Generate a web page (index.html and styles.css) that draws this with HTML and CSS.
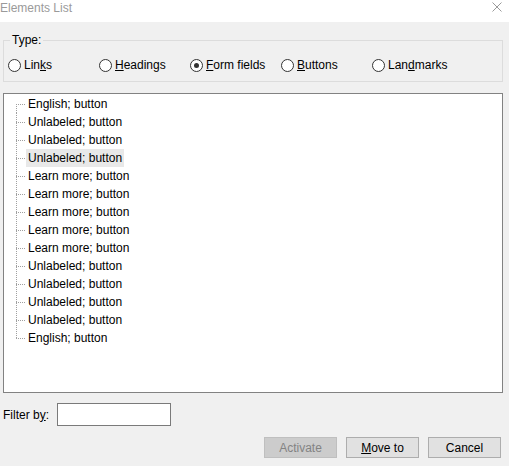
FILE: index.html
```html
<!DOCTYPE html>
<html>
<head>
<meta charset="utf-8">
<title>Elements List</title>
<link rel="stylesheet" href="styles.css">
</head>
<body>
<div class="window">
  <div class="titlebar">
    <span class="title">Elements List</span>
    <svg class="close" width="10" height="10" viewBox="0 0 10 10"><path d="M0.5 0.5 L9.5 9.5 M9.5 0.5 L0.5 9.5" stroke="#9a9a9a" stroke-width="1" fill="none"/></svg>
  </div>
  <div class="content">
    <fieldset class="type-group">
      <legend>Type:</legend>
      <div class="radios">
        <label class="radio"><span class="circle"></span><span>Lin<u>k</u>s</span></label>
        <label class="radio"><span class="circle"></span><span><u>H</u>eadings</span></label>
        <label class="radio"><span class="circle checked"></span><span><u>F</u>orm fields</span></label>
        <label class="radio"><span class="circle"></span><span><u>B</u>uttons</span></label>
        <label class="radio"><span class="circle"></span><span>Lan<u>d</u>marks</span></label>
      </div>
    </fieldset>
    <div class="listbox">
      <ul class="tree">
        <li class="first"><span class="branch"></span><span class="item">English; button</span></li>
        <li><span class="branch"></span><span class="item">Unlabeled; button</span></li>
        <li><span class="branch"></span><span class="item">Unlabeled; button</span></li>
        <li><span class="branch"></span><span class="item selected">Unlabeled; button</span></li>
        <li><span class="branch"></span><span class="item">Learn more; button</span></li>
        <li><span class="branch"></span><span class="item">Learn more; button</span></li>
        <li><span class="branch"></span><span class="item">Learn more; button</span></li>
        <li><span class="branch"></span><span class="item">Learn more; button</span></li>
        <li><span class="branch"></span><span class="item">Learn more; button</span></li>
        <li><span class="branch"></span><span class="item">Unlabeled; button</span></li>
        <li><span class="branch"></span><span class="item">Unlabeled; button</span></li>
        <li><span class="branch"></span><span class="item">Unlabeled; button</span></li>
        <li><span class="branch"></span><span class="item">Unlabeled; button</span></li>
        <li class="last"><span class="branch"></span><span class="item">English; button</span></li>
      </ul>
    </div>
    <div class="filter-row">
      <label class="filter-label">Filter b<u>y</u>:</label>
      <span class="textbox"></span>
    </div>
    <div class="buttons">
      <button class="btn" disabled>Activate</button>
      <button class="btn"><u>M</u>ove to</button>
      <button class="btn">Cancel</button>
    </div>
  </div>
</div>
</body>
</html>
```
FILE: styles.css
```css
html, body {
  margin: 0;
  padding: 0;
  background: #f0f0f0;
  font-family: "Liberation Sans", Arial, sans-serif;
  font-size: 12px;
  color: #000;
}

.titlebar {
  height: 22px;
  background: #fff;
  display: flex;
  justify-content: space-between;
  align-items: flex-start;
}

.title {
  color: #9a9a9a;
  line-height: 15px;
  padding-top: 1px;
}

.close {
  margin: 2px 7px 0 0;
}

.content {
  padding: 0 6px 0 3px;
}

.type-group {
  margin: 11px 0 0;
  padding: 0 0 0 4px;
  border: 1px solid #dcdcdc;
}

.type-group legend {
  padding: 0 2px;
  margin-left: 2px;
  line-height: 15px;
}

.radios {
  display: grid;
  grid-template-columns: repeat(5, 91px);
  padding: 9px 0 8px;
}

.radio {
  display: flex;
  align-items: center;
  gap: 3px;
  height: 16px;
  line-height: 16px;
}

.circle {
  width: 11px;
  height: 11px;
  border: 1px solid #333;
  border-radius: 50%;
  background: #fff;
  display: flex;
  align-items: center;
  justify-content: center;
  flex: none;
}

.circle.checked::after {
  content: "";
  width: 5px;
  height: 5px;
  border-radius: 50%;
  background: #333;
}

.listbox {
  margin-top: 11px;
  height: 298px;
  border: 1px solid #828282;
  background: #fff;
}

.tree {
  list-style: none;
  margin: 0;
  padding: 1px 0 0 12px;
}

.tree li {
  display: flex;
  height: 18px;
  line-height: 18px;
}

.branch {
  width: 10px;
  flex: none;
  background-image:
    repeating-linear-gradient(to bottom, #a0a0a0 0 1px, transparent 1px 2px),
    repeating-linear-gradient(to right, #a0a0a0 0 1px, transparent 1px 2px);
  background-size: 1px 100%, 100% 1px;
  background-position: 0 0, 0 9px;
  background-repeat: no-repeat;
}

.tree li.first .branch {
  background-size: 1px 9px, 100% 1px;
  background-position: 0 9px, 0 9px;
}

.tree li.last .branch {
  background-size: 1px 10px, 100% 1px;
  background-position: 0 0, 0 9px;
}

.item {
  padding: 0 2px;
}

.item.selected {
  background: #e8e8e8;
}

.filter-row {
  margin-top: 10px;
  display: flex;
  align-items: center;
}

.filter-label {
  width: 54px;
}

.textbox {
  width: 112px;
  height: 21px;
  border: 1px solid #7a7a7a;
  background: #fff;
}

.buttons {
  margin-top: 11px;
  padding-right: 2px;
  display: flex;
  justify-content: flex-end;
  gap: 9px;
}

.btn {
  box-sizing: border-box;
  width: 73px;
  height: 21px;
  padding: 0;
  font: inherit;
  color: #000;
  background: #e1e1e1;
  border: 1px solid #adadad;
}

.btn:disabled {
  background: #cccccc;
  border-color: #bfbfbf;
  color: #838383;
}
```
